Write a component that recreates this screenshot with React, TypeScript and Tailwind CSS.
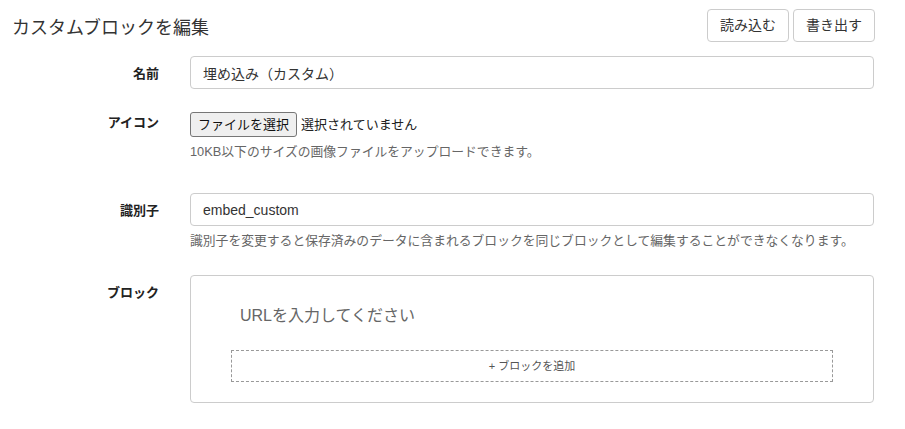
import React from "react"

const font = { fontFamily: '"Liberation Sans", "Noto Sans CJK JP", sans-serif' }

// フォームの1行（ラベル + 入力部分）
const Row: React.FC<{ label: string; labelClass?: string; children: React.ReactNode }> = ({ label, labelClass, children }) => (
  <div className="grid grid-cols-[159px_1fr] gap-x-[31px]">
    <div className={`text-right text-[13px] font-bold text-[#222] ${labelClass ?? ""}`}>{label}</div>
    <div>{children}</div>
  </div>
)

export default function App() {
  return (
    <div className="h-[429px] w-[905px] bg-white text-[#333]" style={font}>
      <div className="flex items-start justify-between pl-[12px] pr-[30px] pt-[9px]">
        <h1 className="pt-[6px] text-[18px] leading-[26px] text-[#333]">カスタムブロックを編集</h1>
        <div className="flex gap-[4px]">
          <button type="button" className="h-[33px] w-[82px] rounded-[4px] border border-[#ccc] bg-white text-[14px] text-[#333]">
            読み込む
          </button>
          <button type="button" className="h-[33px] w-[82px] rounded-[4px] border border-[#ccc] bg-white text-[14px] text-[#333]">
            書き出す
          </button>
        </div>
      </div>

      <div className="mt-[14px] flex flex-col pr-[31px]">
        <Row label="名前" labelClass="pt-[8px]">
          <input
            readOnly
            value="埋め込み（カスタム）"
            className="h-[33px] w-full rounded-[4px] border border-[#ccc] px-[12px] text-[14px] text-[#333] outline-none"
            style={font}
          />
        </Row>

        <div className="mt-[23px]">
          <Row label="アイコン" labelClass="pt-[1px]">
            <div className="flex items-center gap-[4px]">
              <button
                type="button"
                className="h-[25px] rounded-[3px] border border-[#767676] bg-[#efefef] px-[7px] text-[13px] text-[#111]"
              >
                ファイルを選択
              </button>
              <span className="text-[13px] text-[#222]">選択されていません</span>
            </div>
            <p className="mt-[6px] text-[12.8px] leading-[18px] text-[#666]">10KB以下のサイズの画像ファイルをアップロードできます。</p>
          </Row>
        </div>

        <div className="mt-[32px]">
          <Row label="識別子" labelClass="pt-[8px]">
            <input
              readOnly
              value="embed_custom"
              className="h-[33px] w-full rounded-[4px] border border-[#ccc] px-[12px] text-[14px] text-[#333] outline-none"
              style={font}
            />
            <p className="mt-[6px] text-[12.8px] leading-[18px] text-[#666]">
              識別子を変更すると保存済みのデータに含まれるブロックを同じブロックとして編集することができなくなります。
            </p>
          </Row>
        </div>

        <div className="mt-[25px]">
          <Row label="ブロック" labelClass="pt-[8px]">
            <div className="h-[128px] rounded-[4px] border border-[#ccc] px-[40px] pt-[28px]">
              <div className="pl-[9px] text-[16px] leading-[24px] text-[#666]">URLを入力してください</div>
              <div className="mt-[22px] flex h-[32px] items-center justify-center border border-dashed border-[#999] text-[11px] text-[#555]">
                + ブロックを追加
              </div>
            </div>
          </Row>
        </div>
      </div>
    </div>
  )
}
